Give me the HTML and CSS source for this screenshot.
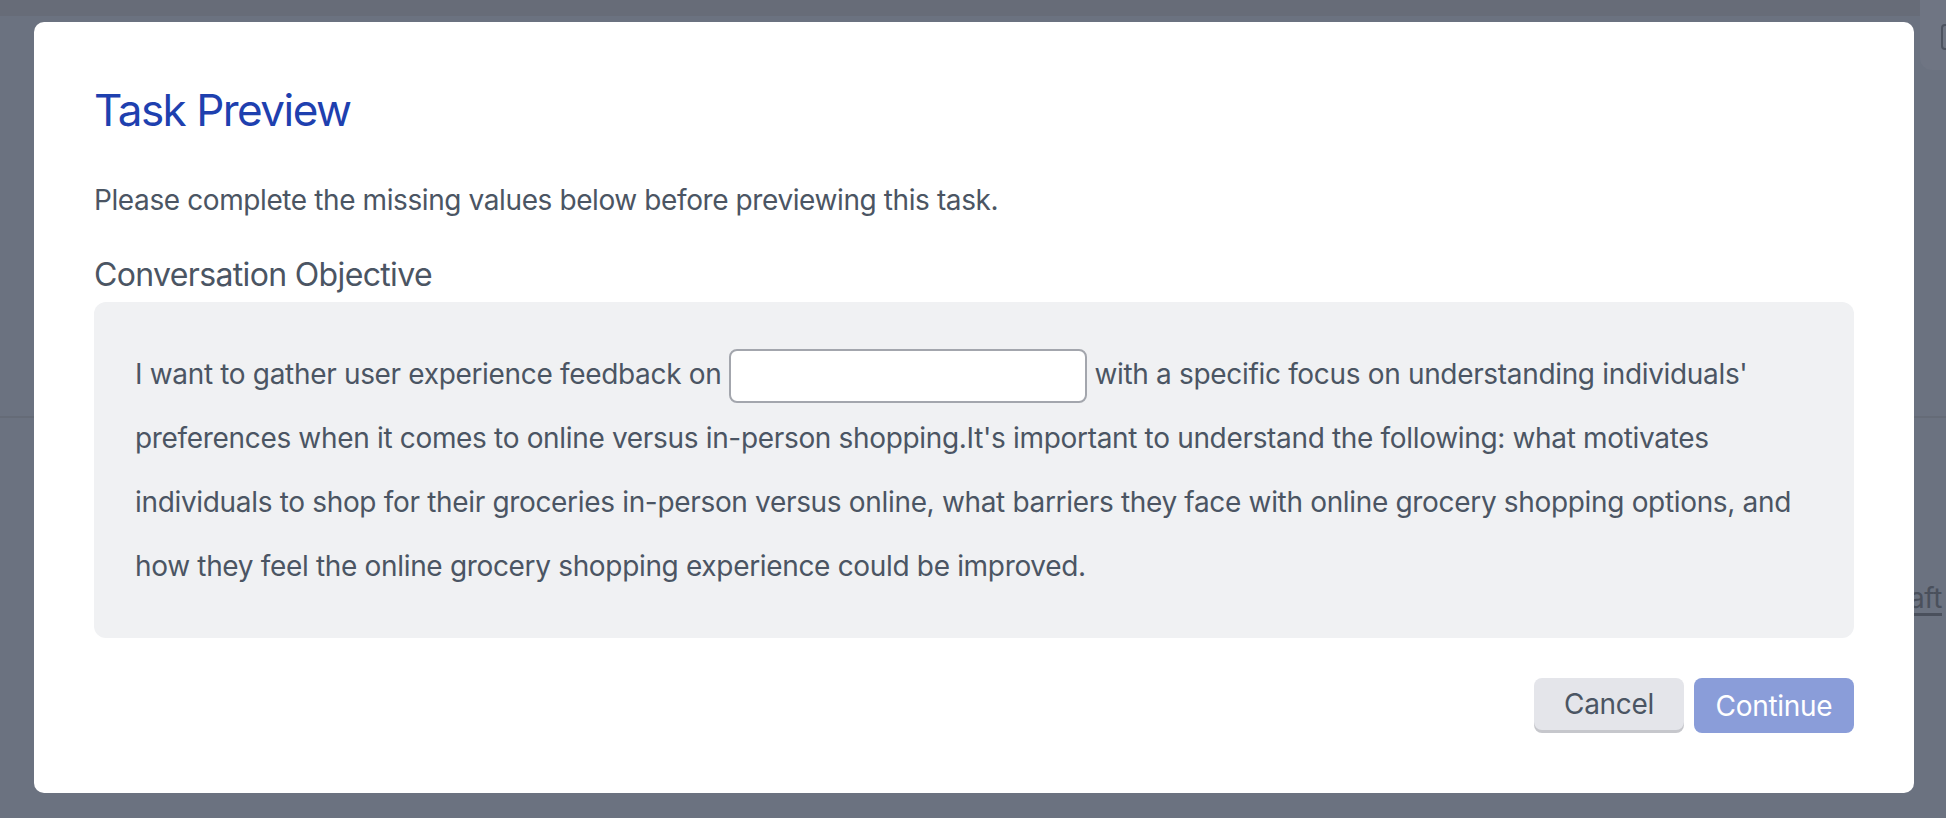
FILE: index.html
```html
<!DOCTYPE html>
<html lang="en">
<head>
<meta charset="utf-8">
<title>Task Preview</title>
<link rel="stylesheet" href="styles.css">
</head>
<body>
<div class="page">
  <div class="page-header">
    <div class="header-fill"></div>
    <div class="header-card">
      <svg class="card-icon" width="30" height="26" viewBox="0 0 30 26"><rect x="1" y="1" width="30" height="24" rx="3" fill="none" stroke="#4d5360" stroke-width="2"/></svg>
    </div>
  </div>
  <div class="page-divider"></div>
  <div class="page-row">
    <a class="draft-link">Draft</a>
  </div>
</div>

<div class="overlay">
  <div class="modal">
    <h1 class="modal-title">Task Preview</h1>
    <p class="modal-intro">Please complete the missing values below before previewing this task.</p>
    <h2 class="section-label">Conversation Objective</h2>
    <div class="objective">
      I want to gather user experience feedback on <input class="blank" type="text"> with a specific focus on understanding individuals' preferences when it comes to online versus in-person shopping.It's important to understand the following: what motivates individuals to shop for their groceries in-person versus online, what barriers they face with online grocery shopping options, and how they feel the online grocery shopping experience could be improved.
    </div>
    <div class="actions">
      <button class="btn btn-cancel">Cancel</button>
      <button class="btn btn-continue">Continue</button>
    </div>
  </div>
</div>
</body>
</html>
```

FILE: styles.css
```css
html, body {
  margin: 0;
  padding: 0;
}

body {
  width: 1946px;
  height: 818px;
  overflow: hidden;
  background: #6b7280;
  font-family: Inter, "Noto Sans", "Liberation Sans", sans-serif;
}

/* underlying page (dimmed) */
.page {
  display: flex;
  flex-direction: column;
}

.page-header {
  display: flex;
  align-items: flex-start;
  height: 70px;
}

.header-fill {
  flex: 1;
  height: 16px;
  background: #676c78;
}

.header-card {
  width: 60px;
  height: 70px;
  margin-right: -34px;
  background: #6f7583;
  border-radius: 0 0 0 12px;
  box-sizing: border-box;
  padding: 24px 0 0 21px;
}

.card-icon {
  display: block;
}

.page-divider {
  margin-top: 346px;
  height: 2px;
  background: #656b77;
}

.page-row {
  display: flex;
  justify-content: flex-end;
  padding: 162px 4px 0 0;
}

.draft-link {
  font-size: 28px;
  line-height: 36px;
  letter-spacing: -0.4px;
  color: #4a505c;
  text-decoration: underline;
  text-decoration-thickness: 3px;
  text-underline-offset: 5px;
}

/* modal */
.overlay {
  position: fixed;
  inset: 0;
  display: flex;
  align-items: flex-start;
  justify-content: center;
}

.modal {
  width: 1880px;
  margin: 22px 0 0 2px;
  box-sizing: border-box;
  background: #ffffff;
  border-radius: 10px;
  padding: 60px;
}

.modal-title {
  margin: 0;
  font-size: 44px;
  line-height: 56px;
  font-weight: 400;
  letter-spacing: -1.5px;
  color: #1e40af;
}

.modal-intro {
  margin: 42px 0 0 0;
  font-size: 28px;
  line-height: 40px;
  letter-spacing: -0.4px;
  color: #4b5563;
}

.section-label {
  margin: 35px 0 0 0;
  font-size: 32px;
  line-height: 40px;
  font-weight: 400;
  letter-spacing: -0.65px;
  color: #4b5563;
}

.objective {
  margin-top: 7px;
  background: #f0f1f3;
  border-radius: 12px;
  padding: 40px 40px 40px 41px;
  font-size: 28px;
  line-height: 64px;
  letter-spacing: -0.33px;
  color: #4b5563;
}

.blank {
  display: inline-block;
  vertical-align: middle;
  box-sizing: border-box;
  width: 358px;
  height: 54px;
  margin: 0;
  padding: 0 14px;
  border: 2px solid #a3a6ad;
  border-radius: 8px;
  background: #ffffff;
  font: inherit;
}

.actions {
  display: flex;
  justify-content: flex-end;
  align-items: flex-start;
  gap: 10px;
  margin-top: 40px;
}

.btn {
  font-family: inherit;
  font-size: 28px;
  letter-spacing: -0.3px;
  border: none;
  border-radius: 8px;
  padding: 0;
  cursor: pointer;
}

.btn-cancel {
  width: 150px;
  height: 52px;
  background: #e4e5ea;
  color: #4b5563;
  box-shadow: 0 3px 0 #c6c7cc;
}

.btn-continue {
  width: 160px;
  height: 55px;
  background: #8a9dd9;
  color: #ffffff;
}
```
